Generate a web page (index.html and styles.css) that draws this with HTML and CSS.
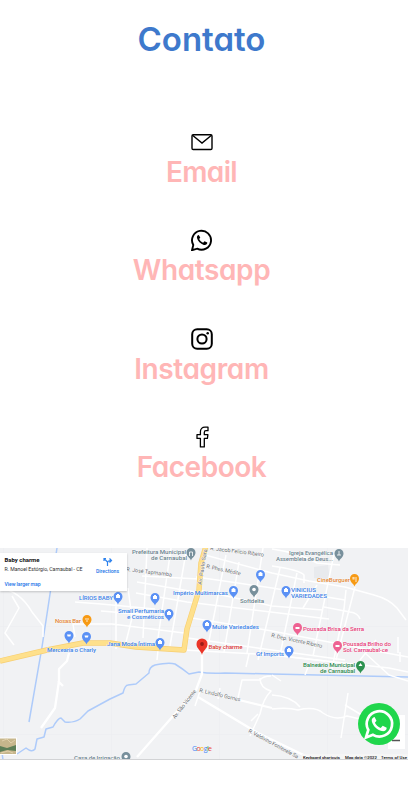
FILE: index.html
```html
<!DOCTYPE html>
<html lang="pt-BR">
<head>
<meta charset="utf-8">
<meta name="viewport" content="width=device-width, initial-scale=1">
<title>Contato</title>
<link rel="stylesheet" href="styles.css">
</head>
<body>
<main class="contact">
  <h1 class="title">Contato</h1>
  <section class="links">
    <a class="link">
      <svg class="icon" viewBox="0 0 22 22" fill="none" stroke="#000" stroke-width="1.4"><rect x="1" y="3.7" width="20" height="14.8" rx="1.2"/><path d="M1.5 4.3 11 12l9.500-7.700"/></svg>
      <h2 class="name email">Email</h2>
    </a>
    <a class="link">
      <svg class="icon" viewBox="0 0 22 22"><path d="M1 21.200 2.300 16A9.500 9.500 0 1 1 6.200 19.700Z" fill="none" stroke="#000" stroke-width="1.9"/><path d="M7.700 5.900c-1.200.2-2.100 1.600-1.700 3.100.7 3.100 3.500 5.900 6.800 6.900 1.900.5 3.600-.5 3.500-2.300l-2.800-1.400-1.400 1.500c-1.800-.7-3.100-2-3.900-3.600l1.100-1.500Z"/></svg>
      <h2 class="name whatsapp">Whatsapp</h2>
    </a>
    <a class="link">
      <svg class="icon" viewBox="0 0 22 22" fill="none" stroke="#000" stroke-width="2"><rect x="1.200" y="1.200" width="19.600" height="19.600" rx="5"/><circle cx="11" cy="11" r="4.600"/><circle cx="16.700" cy="5.300" r="1.250" fill="#000" stroke="none"/></svg>
      <h2 class="name instagram">Instagram</h2>
    </a>
    <a class="link">
      <svg class="icon" viewBox="0 0 22 22"><path d="M9.400 20.900V12.400H6V8.700h3.400V5.700C9.400 2.800 11.200 1.200 14 1.200h3v3.500h-2c-1.200 0-1.700.6-1.700 1.700v2.300h3.600l-.5 3.700h-3.100v8.500Z" fill="none" stroke="#000" stroke-width="1.300" stroke-linejoin="round"/></svg>
      <h2 class="name facebook">Facebook</h2>
    </a>
  </section>
  <section class="map">
    <svg class="map-art" viewBox="0 548 408 212">
      <defs>
        <path id="pin" d="M0 6.500C-.8 3.500-4.500 2.500-4.500-1.500a4.500 4.500 0 0 1 9 0C4.500 2.500.8 3.500 0 6.500Z"/>
        <path id="bag" d="M-2-2H2V1H-2ZM-1-2v-1H1v1" fill="#fff"/>
      </defs>
      <path class="tile" d="M3.500 548V760M111.500 548V760M219.500 548V760M327.500 548V760M0 626.500H408M0 734.500H408"/>
      <path class="block" d="M314 567l14-2 2 15-16-2Z"/>
      <g class="water">
        <path d="M57 548 42 647 29 722"/>
        <path d="M3 760 2 753M17 754 26 748Q32 753 35 749L37 739 44 737 46 729 53 727Q58 718 61 718L65 722Q74 723 80 719L88 711 110 699 123 693Q125 685 128 685L136 684 149 673Q149 667 155 665Q169 662 175 664Q183 669 189 674L199 672Q210 674 225 673L272 674 408 677"/>
      </g>
      <g class="road thin">
        <path d="M0 588Q20 591 32 612L43 626V637M12 596 19 608 5 633 14 645M0 563 15 578"/>
        <path d="M75 637 73 624H112L184 633M75 602 101 604 155 609M116 588V649M101 611 150 615M128 588 132 618 125 646M137 582 195 592M142 576 199 579M147 548 143 638M171 548 157 645M186 552 170 646M136 593 187 602 329 619"/>
        <path d="M205 555 272 573 309 581 345 587 374 595Q389 599 397 608L406 620M199 590 272 606 323 610M196 577 238 583 272 588 345 600M192 618 272 631 360 648 408 657M188 638 272 650 345 660M184 650 272 655 325 661"/>
        <path d="M226 555 207 651M239 562 224 652M263 548 247 653M280 568 258 660M297 573 280 655M317 585 303 608M334 554 313 656M346 590 344 609 332 669M355 587 336 660M272 566Q300 570 304 575V583M324 607 350 612Q358 613 360 619M398 637V653M376 640 360 660M272 549Q300 553 317 563L340 565"/>
        <path d="M158 650 157 660M272 655 389 668 408 672M249 654 246 667M400 652 400 662M365 653 389 675 408 681"/>
        <path d="M272 695Q291 696 300 707M272 709Q288 707 298 710 315 706 323 713 335 721 347 716L373 722M348 693 341 738M345 705 365 717M201 688 195 706M238 698 242 680H260Q263 676 271 676M260 678Q260 688 271 691Q263 699 260 714L250 736M258 714 251 721M220 688 218 699M272 675 281 681M305 675 308 667"/>
      </g>
      <g class="road wide">
        <path d="M69 653 67 661 59 669V681L55 708 41 728M58 681 63 686M202 650V674L196 690 137 757M198 697 258 733 318 762M204 692 239 700 272 708"/>
      </g>
      <path class="avenue-edge" d="M0 661 47 650 83 643H110L136 647 184 650 187 629 199 590 201 563 206 546"/>
      <path class="avenue" d="M0 661 47 650 83 643H110L136 647 184 650 187 629 199 590 201 563 206 546"/>
      <g class="labels">
        <g class="gray">
          <text x="132" y="554" textLength="54">Prefeitura Municipal</text><text x="151" y="560" textLength="36">de Carnaubal</text>
          <text x="289" y="555" textLength="44">Igreja Evangélica</text><text x="276" y="561" textLength="57">Assembleia de Deus...</text>
          <text x="240" y="603" textLength="24">Softdelta</text><text x="74" y="760" textLength="46">Casa de Irrigação</text>
        </g>
        <g class="blue">
          <text x="79" y="600" textLength="34">LÍRIOS BABY</text><text x="118" y="613" textLength="46">Small Perfumaria</text><text x="127" y="619" textLength="37">e Cosméticos</text>
          <text x="173" y="594.500" textLength="55">Império Multimarcas</text><text x="212" y="629" textLength="47">Multe Variedades</text>
          <text x="291" y="592" textLength="25">VINICIUS</text><text x="291" y="598" textLength="36">VARIEDADES</text>
          <text x="107" y="646" textLength="48">Jana Moda Íntima</text><text x="47" y="651.500" textLength="49">Mercearia o Charly</text><text x="256" y="655.500" textLength="28">Gf Imports</text>
        </g>
        <g class="orange"><text x="55" y="623" textLength="26">Nosas Bar</text><text x="317" y="582" textLength="33">CineBurguer</text></g>
        <g class="pink"><text x="303" y="631" textLength="61">Pousada Brisa da Serra</text><text x="343" y="646" textLength="48">Pousada Brilho do</text><text x="343" y="652" textLength="45">Sol. Carnaubal-ce</text></g>
        <g class="red"><text x="208.500" y="648.500" textLength="34">Baby charme</text></g>
        <g class="green"><text x="303" y="667" textLength="52">Balneário Municipal</text><text x="320" y="673" textLength="35">de Carnaubal</text></g>
        <g class="street">
          <text transform="translate(126 571) rotate(7)" textLength="46">R. José Tapmamba</text>
          <text transform="translate(210 550) rotate(7)" textLength="54">R. Jacob Felício Ribeiro</text>
          <text transform="translate(206 568) rotate(12)" textLength="35">R. Phes. Médite</text>
          <text transform="translate(201.500 585) rotate(-81)" textLength="36">Av. Paulo Sara</text>
          <text transform="translate(271 637) rotate(12)" textLength="52">R. Dep. Vicente Ribeiro</text>
          <text transform="translate(175 719) rotate(-52)" textLength="35">Av. São Vicente</text>
          <text transform="translate(199 692) rotate(13)" textLength="42">R. Lindolfo Gomes</text>
          <text transform="translate(248 732) rotate(28.500)" textLength="56">R. Valdivino Fontenele Sa</text>
        </g>
      </g>
      <g fill="#5b91f5">
        <use href="#pin" x="118" y="598"/><use href="#pin" x="155" y="599"/><use href="#pin" x="169" y="615"/><use href="#pin" x="207" y="626"/><use href="#pin" x="160" y="644"/><use href="#pin" x="69" y="637"/><use href="#pin" x="86.500" y="638"/><use href="#pin" x="233.500" y="592"/><use href="#pin" x="260.500" y="576"/><use href="#pin" x="286" y="592"/><use href="#pin" x="289" y="652"/>
      </g>
      <g fill="#78909c"><use href="#pin" x="191" y="554"/><use href="#pin" x="254" y="591"/><use href="#pin" x="339" y="555"/><use href="#pin" x="126" y="758"/></g>
      <g fill="#f79a14"><use href="#pin" x="87" y="621"/><use href="#pin" x="354.500" y="580"/></g>
      <g fill="#ee6192"><use href="#pin" x="297.500" y="629"/><use href="#pin" x="337.500" y="647"/></g>
      <use href="#pin" x="360.500" y="667" fill="#2d9250"/>
      <g><use href="#bag" x="118" y="597"/><use href="#bag" x="155" y="598"/><use href="#bag" x="169" y="614"/><use href="#bag" x="207" y="625"/><use href="#bag" x="160" y="643"/><use href="#bag" x="233.500" y="591"/><use href="#bag" x="260.500" y="575"/><use href="#bag" x="286" y="591"/><use href="#bag" x="289" y="651"/></g>
      <path d="M67 634.500h4l-.6 2h-2.800ZM84.500 635.500h4l-.6 2h-2.800ZM295.500 627h4v2h-4ZM335.500 645h4v2h-4ZM360.500 663l2 3h-4Z" fill="#fff"/>
      <path d="M353 577v2.500M354 577v2.500M356 577v5M86 618v2M88 618v2M87 620v2M189.500 556v-4h3v4M337 555h4M339 551v4" fill="none" stroke="#fff" stroke-width=".8"/>
      <circle cx="254" cy="589.500" r="1.800" fill="#fff"/><circle cx="126" cy="756.500" r="1.800" fill="#fff"/>
      <path d="M202 655C201 650 196.500 649 196.500 644a5.500 5.500 0 0 1 11 0C207.500 649 203 650 202 655Z" fill="#ea3527"/><circle cx="202" cy="644" r="1.900" fill="#9b1c16"/>
      <text class="google" x="192" y="750.500" textLength="20"><tspan fill="#4285f4">G</tspan><tspan fill="#ea4335">o</tspan><tspan fill="#fbbc05">o</tspan><tspan fill="#4285f4">g</tspan><tspan fill="#34a853">l</tspan><tspan fill="#ea4335">e</tspan></text>
      <path d="M0 737.500H17V755H0Z" fill="#fff"/><path d="M0 738.500H16V754H0Z" fill="#c6b68c"/><path d="M0 746 7 748 16 745V751L7 750 0 752Z" fill="#5e7f58"/><path d="M2 741 7 739 11 743 15 740M1 753 8 751 13 753" fill="none" stroke="#e0cfaa"/>
      <rect x="388" y="715" width="17" height="34" fill="#fff"/><path d="M392 740.500h8" stroke="#555" stroke-width="1.500"/>
      <path d="M302 754H408V759H302Z" fill="#f7f7f7" opacity=".75"/>
      <g class="legal"><text x="303" y="758.500" textLength="37">Keyboard shortcuts</text><text x="345" y="758.500" textLength="32">Map data ©2022</text><text x="381" y="758.500" textLength="26">Terms of Use</text></g>
      <path d="M0 759.500H408" stroke="#d2d3d5"/>
    </svg>
    <div class="place">
      <svg viewBox="0 553 127 38">
        <text class="place-name" x="4.500" y="562" textLength="35">Baby charme</text>
        <text class="address" x="4.500" y="571" textLength="78">R. Manoel Estórgio, Carnaubal - CE</text>
        <text class="action" x="4.500" y="586" textLength="36">View larger map</text>
        <text class="action" x="96" y="573" textLength="23">Directions</text>
        <path d="M107.500 566V562L104.500 559M107.500 563Q107.500 560.500 111 560.500M109.500 558.500 111.500 560.500 109.500 562.500M104 561V558.500H106" fill="none" stroke="#2d82ed" stroke-width="1.200"/>
      </svg>
    </div>
    <a class="chat" aria-label="Whatsapp">
      <svg viewBox="0 0 42 42"><circle cx="21" cy="21" r="21" fill="#20d64c"/><path d="M8 34.500 10.300 27A12.700 12.700 0 1 1 15 31.800Z" fill="none" stroke="#fff" stroke-width="2.700"/><path d="M16.600 14c-1.900.2-3.300 2.200-2.800 4.300 1.100 4.700 5.300 8.700 9.900 9.800 2.700.6 5.100-.8 5-3.300l-4-2-2 2.200c-2.800-1-4.800-3-5.800-5.200l1.600-2.100Z" fill="#fff"/></svg>
    </a>
  </section>
</main>
</body>
</html>
```
FILE: styles.css
```css
* { box-sizing: border-box; }
html, body { margin: 0; background: #fff; }
body { height: 785px; overflow: hidden; font-family: "Inter", sans-serif; }
.contact { display: flex; flex-direction: column; }
.title, .name { margin: 0; text-align: center; font-feature-settings: "cv11"; white-space: nowrap; }
.title { height: 131px; padding: 15px 5px 0 0; font-size: 33px; line-height: 48px; font-weight: 600; color: #3e79cc; letter-spacing: 0; }
.links { display: grid; grid-auto-rows: 98.300px; height: 417px; padding-right: 5px; }
.link { display: flex; flex-direction: column; align-items: center; color: #ffb6b6; }
.icon { width: 22px; height: 22px; display: block; }
.name { font-size: 28px; line-height: 38px; font-weight: 600; letter-spacing: -.4px; }
.email { letter-spacing: -.7px; }
.facebook { letter-spacing: -.5px; }
.map { position: relative; height: 212px; overflow: hidden; background: #f1f2f4; }
.map svg { display: block; width: 100%; height: 100%; }
.tile { fill: none; stroke: #eceef0; stroke-width: .7; }
.block { fill: #e8eaed; }
.water { fill: none; stroke: #aecbfa; stroke-width: 1.500; stroke-linejoin: round; }
.road { fill: none; stroke: #fff; stroke-linejoin: round; }
.thin { stroke-width: 1.500; }
.wide { stroke-width: 2.300; }
.avenue-edge, .avenue { fill: none; stroke-linejoin: round; }
.avenue-edge { stroke: #f7cf72; stroke-width: 5.400; }
.avenue { stroke: #fee08c; stroke-width: 4.200; }
.labels { font: 500 6.200px Roboto, sans-serif; stroke: #fff; stroke-width: .5; }
.labels text { paint-order: stroke; }
.gray { fill: #69818c; }
.blue { fill: #397ee6; }
.orange { fill: #e28432; }
.pink { fill: #e53b78; }
.red { fill: #d83a35; }
.green { fill: #28864c; }
.street { fill: #666a6e; font-size: 5.500px; font-weight: 400; }
.google { font: 500 7px "Open Sans", sans-serif; }
.legal { font: 500 4.300px Roboto, sans-serif; fill: #111; }
.place { position: absolute; left: 0; top: 5px; width: 127px; height: 38px; background: #fff; box-shadow: 0 1px 2px #0003; }
.place-name { font: 700 6px Roboto, sans-serif; fill: #111; }
.address { font: 400 5.200px Roboto, sans-serif; fill: #333; }
.action { font: 500 5.100px Roboto, sans-serif; fill: #1a73e8; }
.chat { position: absolute; left: 358px; top: 155px; width: 42px; height: 42px; }
```
